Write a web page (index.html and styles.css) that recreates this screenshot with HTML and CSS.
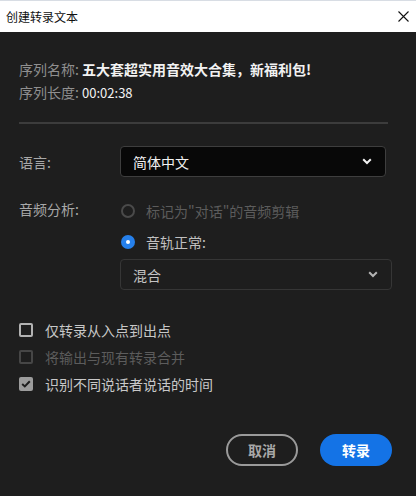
FILE: index.html
```html
<!DOCTYPE html>
<html lang="zh-CN">
<head>
    <meta charset="UTF-8">
    <meta name="viewport" content="width=device-width, initial-scale=1.0">
    <title>创建转录文本</title>
    <link rel="stylesheet" href="styles.css">
</head>
<body>
    <div class="titlebar">
        <div class="title">创建转录文本</div>
        <svg class="close" width="11" height="11" viewBox="0 0 11 11">
            <path d="M0.5 0.5 L10.5 10.5 M10.5 0.5 L0.5 10.5" stroke="#111" stroke-width="1.1" fill="none"/>
        </svg>
    </div>

    <div class="dialog">
        <div class="info">
            <div class="info-row"><span class="info-label">序列名称:</span> <span class="info-value bold">五大套超实用音效大合集，新福利包!</span></div>
            <div class="info-row"><span class="info-label">序列长度:</span> <span class="info-value">00:02:38</span></div>
        </div>

        <div class="divider"></div>

        <div class="form">
            <div class="form-row lang-row">
                <div class="form-label">语言:</div>
                <div class="select select-dark">
                    <span>简体中文</span>
                    <svg class="chevron" width="10" height="7" viewBox="0 0 10 7">
                        <path d="M1.2 1.2 L5 5 L8.8 1.2" stroke="#f2f2f2" stroke-width="2" fill="none"/>
                    </svg>
                </div>
            </div>

            <div class="form-row audio-row">
                <div class="form-label">音频分析:</div>
                <div class="audio-options">
                    <div class="radio-row disabled">
                        <span class="radio"></span>
                        <span>标记为"对话"的音频剪辑</span>
                    </div>
                    <div class="radio-row">
                        <span class="radio checked"></span>
                        <span>音轨正常:</span>
                    </div>
                    <div class="select select-plain">
                        <span>混合</span>
                        <svg class="chevron" width="10" height="7" viewBox="0 0 10 7">
                            <path d="M1.2 1.2 L5 5 L8.8 1.2" stroke="#b4b4b4" stroke-width="2" fill="none"/>
                        </svg>
                    </div>
                </div>
            </div>
        </div>

        <div class="checks">
            <div class="check-row">
                <span class="checkbox"></span>
                <span>仅转录从入点到出点</span>
            </div>
            <div class="check-row disabled">
                <span class="checkbox"></span>
                <span>将输出与现有转录合并</span>
            </div>
            <div class="check-row">
                <span class="checkbox checked">
                    <svg width="10" height="8" viewBox="0 0 10 8">
                        <path d="M1.2 4 L3.8 6.4 L8.8 1.2" stroke="#1e1e1e" stroke-width="2" fill="none"/>
                    </svg>
                </span>
                <span>识别不同说话者说话的时间</span>
            </div>
        </div>

        <div class="buttons">
            <button class="btn btn-cancel">取消</button>
            <button class="btn btn-primary">转录</button>
        </div>
    </div>
</body>
</html>
```

FILE: styles.css
```css
body {
    margin: 0;
    background-color: #1e1e1e;
    font-family: "Noto Sans CJK SC", "Noto Sans", "Liberation Sans", sans-serif;
    font-size: 14px;
    color: #c8c8c8;
    height: 496px;
    overflow: hidden;
}
.titlebar {
    height: 31px;
    background-color: #ffffff;
    border-top: 1px solid #d8dde4;
    display: flex;
    align-items: center;
    justify-content: space-between;
    padding: 0 7px 0 6px;
}
.title {
    font-size: 12px;
    color: #111;
    line-height: 16px;
}
.close {
    display: block;
}
.dialog {
    padding: 26px 28px 0 19px;
}
.info-row {
    line-height: 23px;
    height: 23px;
}
.info-label {
    color: #8f8f8f;
}
.info-value {
    color: #f2f2f2;
    font-size: 13px;
}
.info-value.bold {
    font-weight: bold;
    font-size: 14px;
}
.divider {
    height: 2px;
    background-color: #3c3c3c;
    margin-top: 18px;
}
.form {
    margin-top: 22px;
}
.form-row {
    display: flex;
}
.form-label {
    width: 101px;
    flex-shrink: 0;
    color: #a8a8a8;
}
.lang-row {
    align-items: center;
}
.audio-row {
    margin-top: 20px;
}
.audio-row .form-label {
    line-height: 25px;
    height: 25px;
}
.select {
    height: 31px;
    box-sizing: border-box;
    border-radius: 4px;
    display: flex;
    align-items: center;
    justify-content: space-between;
    padding: 0 12px 0 12px;
}
.select-dark {
    width: 266px;
    background-color: #080808;
    border: 1px solid #3e3e3e;
    color: #f2f2f2;
}
.select-plain {
    width: 272px;
    background-color: #1e1e1e;
    border: 1px solid #363636;
    color: #c4c4c4;
}
.chevron {
    display: block;
    margin-right: 1px;
}
.audio-options {
    display: flex;
    flex-direction: column;
    gap: 4px;
}
.radio-row {
    display: flex;
    align-items: center;
    gap: 11px;
    height: 27px;
    padding-left: 1px;
    color: #c0c0c0;
}
.radio-row.disabled {
    color: #5c5c5c;
}
.radio {
    width: 14px;
    height: 14px;
    box-sizing: border-box;
    border-radius: 50%;
    border: 2px solid #4a4a4a;
    position: relative;
}
.radio.checked {
    border: none;
    background-color: #2680eb;
}
.radio.checked::after {
    content: "";
    position: absolute;
    left: 5px;
    top: 5px;
    width: 4px;
    height: 4px;
    border-radius: 50%;
    background-color: #ffffff;
}
.checks {
    margin-top: 26px;
    display: flex;
    flex-direction: column;
}
.check-row {
    display: flex;
    align-items: center;
    gap: 12px;
    height: 27px;
    color: #c8c8c8;
}
.check-row.disabled {
    color: #5c5c5c;
}
.checkbox {
    width: 14px;
    height: 14px;
    box-sizing: border-box;
    border: 2px solid #b2b2b2;
    border-radius: 2px;
    display: flex;
    align-items: center;
    justify-content: center;
}
.check-row.disabled .checkbox {
    border-color: #464646;
}
.checkbox.checked {
    border: none;
    background-color: #9c9c9c;
}
.buttons {
    display: flex;
    justify-content: flex-end;
    gap: 22px;
    margin-top: 37px;
    margin-right: -4px;
}
.btn {
    height: 32px;
    width: 72px;
    border-radius: 16px;
    font-family: "Noto Sans CJK SC", sans-serif;
    font-size: 14px;
    font-weight: bold;
    box-sizing: border-box;
    cursor: pointer;
}
.btn-cancel {
    background: none;
    border: 2px solid #9a9a9a;
    color: #a8a8a8;
}
.btn-primary {
    background-color: #1473e6;
    border: none;
    color: #ffffff;
}
```
